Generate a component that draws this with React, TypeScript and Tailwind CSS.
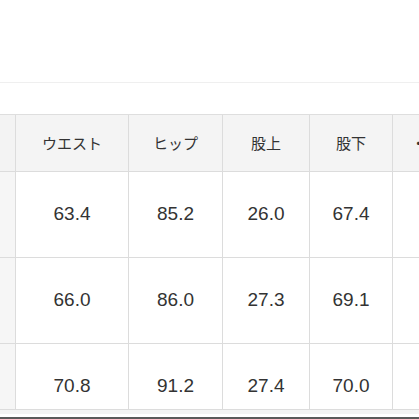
import React from "react";

const headers = ["ウエスト", "ヒップ", "股上", "股下"];
const rows = [
  ["63.4", "85.2", "26.0", "67.4"],
  ["66.0", "86.0", "27.3", "69.1"],
  ["70.8", "91.2", "27.4", "70.0"],
];

export default function App() {
  return (
    <div className="w-[419px] h-[419px] overflow-hidden bg-white relative" style={{ fontFamily: '"Liberation Sans", "Noto Sans CJK JP", sans-serif' }}>
      <div className="h-[83px] border-b border-[#efefef]" />
      <div className="h-[31px]" />
      <div className="border-t border-[#dedede]">
        <div className="grid grid-cols-[16px_113px_94px_87px_83px_96px] w-[489px]">
          <div className="h-[57px] bg-[#f3f3f3] border-r border-b border-[#dcdcdc]" />
          {headers.map((h) => (
            <div key={h} className="h-[57px] bg-[#f4f4f4] border-r border-b border-[#dcdcdc] flex items-center justify-center text-[15px] text-[#333]" style={{ fontFamily: '"Noto Sans CJK JP", sans-serif' }}>
              {h}
            </div>
          ))}
          <div className="h-[57px] bg-[#f4f4f4] border-b border-[#dcdcdc] flex items-center justify-center text-[15px] text-[#333]" style={{ fontFamily: '"Noto Sans CJK JP", sans-serif' }}>
            ・わたり
          </div>
          {rows.map((r, i) => (
            <React.Fragment key={i}>
              <div className={`${i === 2 ? "h-[66px]" : "h-[86px]"} bg-[#f6f6f6] border-r border-b border-[#dcdcdc]`} />
              {r.map((v, j) => (
                <div key={j} className={`${i === 2 ? "h-[66px] pt-[20px]" : "h-[86px]"} bg-white border-r border-b border-[#dcdcdc] flex items-center justify-center text-[19px] text-[#333]`}>
                  {v}
                </div>
              ))}
              <div className={`${i === 2 ? "h-[66px]" : "h-[86px]"} bg-white border-b border-[#dcdcdc]`} />
            </React.Fragment>
          ))}
        </div>
      </div>
      <div className="h-[4px] bg-[#f3f3f3]" />
      <div className="absolute left-0 right-0 bottom-0 h-[2px] bg-[#5a5a5a]" />
    </div>
  );
}
